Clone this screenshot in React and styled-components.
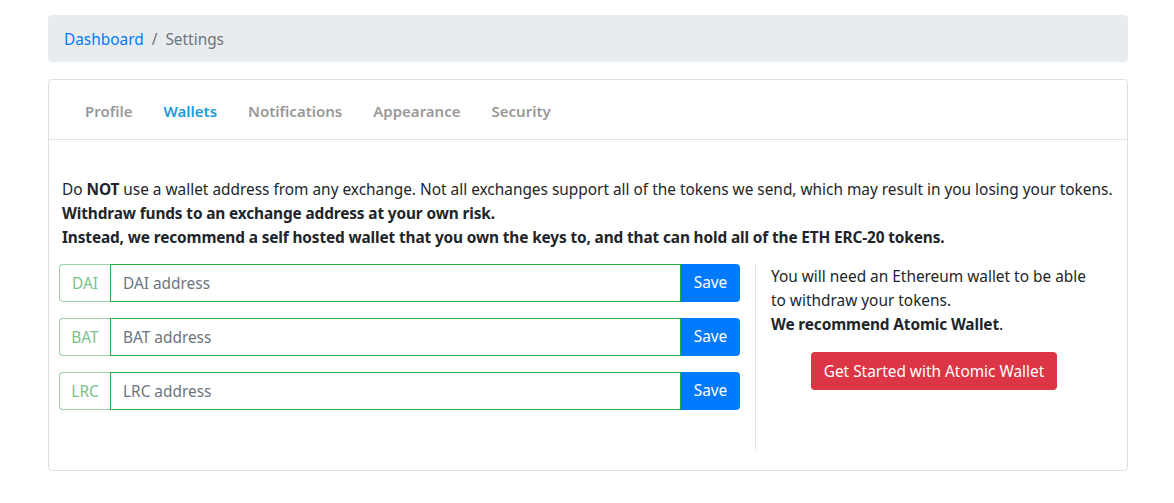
import React from 'react';
import styled, { createGlobalStyle } from 'styled-components';

const GlobalStyle = createGlobalStyle`
  body {
    margin: 0;
    background: #fff;
    font-family: "Noto Sans", "Open Sans", sans-serif;
    font-size: 15.4px;
    line-height: 24px;
    color: #212529;
  }
  b { letter-spacing: -0.13px; }
  * { box-sizing: border-box; }
`;

const Page = styled.div`
  padding: 15px 46px 0 48px;
`;

const Breadcrumb = styled.nav`
  display: flex;
  align-items: center;
  height: 47px;
  padding: 2px 16px 0;
  background: #e9ecef;
  border-radius: 4px;
  margin-bottom: 17px;
  color: #6c757d;
`;

const Crumb = styled.a`
  color: #007bff;
  text-decoration: none;
`;

const Sep = styled.span`
  padding: 0 8px;
  color: #6c757d;
`;

const Card = styled.div`
  border: 1px solid #dfdfdf;
  border-radius: 4px;
  height: 392px;
`;

const Tabs = styled.div`
  display: flex;
  height: 60px;
  align-items: center;
  padding: 2px 0 0 36px;
  border-bottom: 1px solid #e3e3e3;
`;

const Tab = styled.a`
  font-size: 15px;
  font-weight: 600;
  color: ${p => (p.$active ? '#1a9bdc' : '#999')};
  margin-right: 31px;
  cursor: pointer;
`;

const Body = styled.div`
  padding: 38px 10px 0 13px;
`;

const Notice = styled.p`
  margin: 0 0 14px;
`;

const Row = styled.div`
  display: flex;
`;

const LeftCol = styled.div`
  width: 681px;
  margin-left: -3px;
  padding-bottom: 40px;
`;

const RightCol = styled.div`
  flex: 1;
  margin-left: 15px;
  border-left: 1px solid #e3e3e3;
  padding: 1px 0 0 15px;
  height: 186px;
`;

const Group = styled.div`
  display: flex;
  height: 38px;
  margin-bottom: 16px;
`;

const Prepend = styled.span`
  display: flex;
  align-items: center;
  justify-content: center;
  width: 51px;
  padding-top: 1px;
  border: 1px solid #9dd3aa;
  border-right: none;
  border-radius: 4px 0 0 4px;
  color: #78c28c;
`;

const Input = styled.input`
  flex: 1;
  min-width: 0;
  border: 1px solid #28a745;
  padding: 1px 12px 0;
  font: inherit;
  color: #495057;
  outline: none;
  &::placeholder { color: #6c757d; }
`;

const SaveButton = styled.button`
  width: 59px;
  padding-top: 1px;
  border: none;
  border-radius: 0 4px 4px 0;
  background: #007bff;
  color: #fff;
  font: inherit;
  cursor: pointer;
`;

const Info = styled.p`
  margin: 0 0 15px;
  max-width: 320px;
`;

const Center = styled.div`
  display: flex;
  justify-content: center;
  padding-right: 20px;
`;

const DangerButton = styled.button`
  height: 38px;
  padding: 1px 13px 0;
  border: none;
  border-radius: 4px;
  background: #dc3545;
  color: #fff;
  font: inherit;
  cursor: pointer;
`;

const tokens = ['DAI', 'BAT', 'LRC'];

export default function App() {
  return (
    <>
      <GlobalStyle />
      <Page>
        <Breadcrumb>
          <Crumb href="#">Dashboard</Crumb>
          <Sep>/</Sep>
          <span>Settings</span>
        </Breadcrumb>
        <Card>
          <Tabs>
            <Tab>Profile</Tab>
            <Tab $active>Wallets</Tab>
            <Tab>Notifications</Tab>
            <Tab>Appearance</Tab>
            <Tab>Security</Tab>
          </Tabs>
          <Body>
            <Notice>
              Do <b>NOT</b> use a wallet address from any exchange. Not all exchanges support all of the tokens we send, which may result in you losing your tokens.
              <br />
              <b>Withdraw funds to an exchange address at your own risk.</b>
              <br />
              <b>Instead, we recommend a self hosted wallet that you own the keys to, and that can hold all of the ETH ERC-20 tokens.</b>
            </Notice>
            <Row>
              <LeftCol>
                {tokens.map(t => (
                  <Group key={t}>
                    <Prepend>{t}</Prepend>
                    <Input placeholder={`${t} address`} />
                    <SaveButton>Save</SaveButton>
                  </Group>
                ))}
              </LeftCol>
              <RightCol>
                <Info>
                  You will need an Ethereum wallet to be able to withdraw your tokens.
                  <br />
                  <b>We recommend Atomic Wallet</b>.
                </Info>
                <Center>
                  <DangerButton>Get Started with Atomic Wallet</DangerButton>
                </Center>
              </RightCol>
            </Row>
          </Body>
        </Card>
      </Page>
    </>
  );
}
